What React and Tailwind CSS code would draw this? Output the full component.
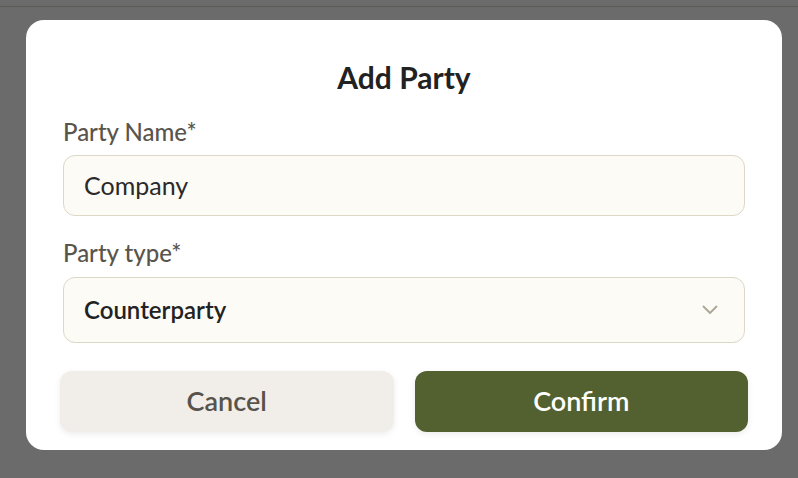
export default function App() {
  return (
    <div className="w-[798px] h-[478px] bg-[#6b6b6b] relative overflow-hidden" style={{ fontFamily: 'Lato, "Open Sans", sans-serif' }}>
      <div className="h-[6px]" />
      <div className="h-px bg-[#5c5c54]" />
      <div className="pt-[13px] pl-[26px]">
        <div className="w-[756px] h-[430px] bg-white rounded-[18px] pt-[39px] px-[37px] flex flex-col">
          <h2 className="text-center text-[30px] font-bold text-[#222222] leading-[36px]">Add Party</h2>

          <label className="mt-[22px] text-[24px] font-medium text-[#5a554c] leading-[29px]">Party Name*</label>
          <div className="mt-[9px] h-[61px] rounded-[12px] border border-[#ddd7c5] bg-[#fdfbf6] flex items-center px-[20px]">
            <span className="text-[25px] text-[#2a2a2a]">Company</span>
          </div>

          <label className="mt-[22px] text-[24px] font-medium text-[#5a554c] leading-[29px]">Party type*</label>
          <div className="mt-[10px] h-[66px] rounded-[12px] border border-[#ddd7c5] bg-[#fdfbf6] flex items-center justify-between pl-[20px] pr-[26px]">
            <span className="text-[24px] font-semibold text-[#222222]">Counterparty</span>
            <svg width="16" height="10" viewBox="0 0 16 10" fill="none">
              <path d="M1.5 1.5 L8 8 L14.5 1.5" stroke="#aba596" strokeWidth="1.8" strokeLinecap="round" strokeLinejoin="round" />
            </svg>
          </div>

          <div className="mt-[28px] flex gap-[21px] -mx-[3px]">
            <button className="flex-1 h-[61px] rounded-[12px] bg-[#f1eeea] text-[27px] font-semibold text-[#58534a] shadow-[0_2px_6px_rgba(0,0,0,0.08)]">Cancel</button>
            <button className="flex-1 h-[61px] rounded-[12px] bg-[#536131] text-[27px] font-semibold text-white shadow-[0_2px_6px_rgba(0,0,0,0.08)]">Confirm</button>
          </div>
        </div>
      </div>
    </div>
  );
}
